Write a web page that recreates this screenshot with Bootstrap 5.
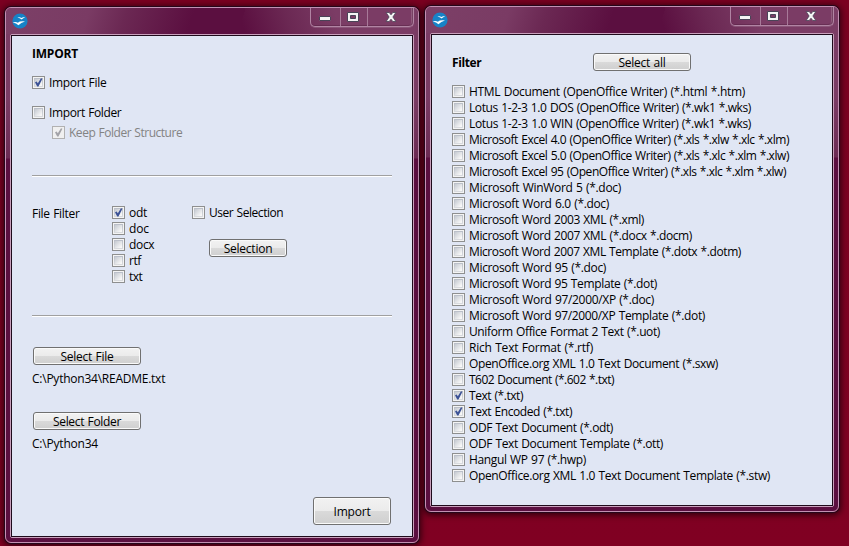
<!DOCTYPE html>
<html lang="en">
<head>
<meta charset="utf-8">
<title>Import</title>
<link rel="stylesheet" href="https://cdn.jsdelivr.net/npm/bootstrap@5.3.0/dist/css/bootstrap.min.css">
<style>
body{width:849px;height:546px;overflow:hidden;background:linear-gradient(#7b0021,#800022);font:12px/13px "Open Sans","Noto Sans",sans-serif;color:#000}
.desk{padding:6px 0 0 5px;gap:6px}
.win{width:414px;border:1px solid #c391b3;border-radius:6px;padding:0 4px 4px;box-shadow:0 0 0 1px #25061a,0 1px 6px 2px rgba(20,0,8,.75);
 background:linear-gradient(#7b3c65 0,#7b3c65 90px,#6c2b54 150px,#5b0f40 151px)}
.win-main{height:536px;margin-top:1px}
.win-filter{height:506px}
.titlebar{height:26px;margin:0 -4px;padding:0 5px 0 6px;border-radius:5px 5px 0 0;background:linear-gradient(108deg,#7c4067 0,#7a3b64 20%,#6b2853 29%,#5b0f40 45%,#5b0f40 57%,#0000 57%),linear-gradient(72deg,#5b0f40 57%,#6b2853 68%,#7b3c65 80%)}
.logo{width:16px;height:16px;margin-top:5px;display:block}
.caps{width:104px;height:19px;border:1px solid #b184a3;border-top:0;border-radius:0 0 5px 5px;box-shadow:inset -1px -1px 0 #4d1b3c66,inset -2px 0 0 #a0708f99,0 1px 0 #9a6b8a88;margin-right:-1px}
.cap{display:block;height:18px;padding-top:4px}
.cap-min{width:29px;padding-left:8px}
.cap-max{width:27px;padding-left:6px}
.cap+.cap{border-left:1px solid #a87a99}
.caps svg{display:block}
.client{border:1px solid #c9a0bc;border-radius:2px;margin:0}
.pane{border:1px solid #1e0a1b;background:#e0e6f4;width:402px}
.win-main .pane{height:502px;padding:11px 20px 11px}
.win-filter .pane{height:472px;padding:18px 20px 0}
.tick{gap:4px;height:13px;white-space:nowrap}
.tick .form-check-input{width:13px;height:13px;margin:0;border:1px solid #8e8f8f;border-radius:0;flex:none;
 background:linear-gradient(135deg,#cbcfd5 10%,#f7f7f7 85%) center/7px 7px no-repeat,linear-gradient(#b9bec8,#dadcdf) center/9px 9px no-repeat #f4f4f4;opacity:1}
.tick .form-check-input:checked{background:url("data:image/svg+xml,%3Csvg xmlns='http://www.w3.org/2000/svg' viewBox='0 0 11 11'%3E%3Cpath d='M2 5.2L3.7 4.5L4.8 6.3L8 1.3L9.4 1.7L5.5 9.4H4.2Z' fill='%233c5296'/%3E%3C/svg%3E") center/11px 11px no-repeat,linear-gradient(135deg,#cbcfd5 10%,#f7f7f7 85%) center/7px 7px no-repeat,linear-gradient(#b9bec8,#dadcdf) center/9px 9px no-repeat #f4f4f4}
.tick .form-check-input:disabled{opacity:1;border-color:#b1b1b1;background:url("data:image/svg+xml,%3Csvg xmlns='http://www.w3.org/2000/svg' viewBox='0 0 11 11'%3E%3Cpath d='M2 5.2L3.7 4.5L4.8 6.3L8 1.3L9.4 1.7L5.5 9.4H4.2Z' fill='%23a3a3a8'/%3E%3C/svg%3E") center/11px 11px no-repeat #f0f0f0}
.off,.tick .form-check-input:disabled~span{color:#838383;opacity:1}
[data-w]{white-space:nowrap;display:inline-block;word-spacing:.6px}
.rule{height:2px;border-top:1px solid #a0a0a0;background:#fff}
.push{height:18px;padding:0;font-size:12px;line-height:18px;color:#000;border:1px solid #707070;border-radius:3px;box-shadow:inset 0 0 0 1px #fafafa;background:linear-gradient(#f2f2f2 0,#ebebeb 49%,#dadada 50%,#cfcfcf 100%)}
.w108{width:108px;margin-left:1px}.w98{width:98px}.w78{width:78px}
.push.tall{height:28px;line-height:25px}
.filters{gap:3px;margin-top:14px}
</style>
</head>
<body>
<svg width="0" height="0" class="position-absolute">
 <symbol id="gulls" viewBox="0 0 16 16"><circle cx="8" cy="8" r="7.6" fill="#1683c7"/><path d="M5.3 4.4Q8 3.7 9.4 4.9Q11 3.7 13.3 4.5Q11 4.9 9.7 6.4Q8 5 5.3 4.4ZM.6 9.4Q4 8.4 5.8 9.7Q8 7.9 13 8.5Q9 9.5 6.4 12.2Q4.6 10.2 .6 9.4Z" fill="#fff"/></symbol>
 <symbol id="win-min" viewBox="0 0 12 9"><rect x=".5" y="4.5" width="11" height="4" rx=".5" fill="#f4f4f4" stroke="#4a4357"/></symbol>
 <symbol id="win-max" viewBox="0 0 12 10"><path d="M.5.5h11v9H.5ZM3.5 3.5v3h5v-3Z" fill="#f4f4f4" fill-rule="evenodd" stroke="#4a4357"/></symbol>
 <symbol id="win-close" viewBox="0 0 12 10"><path d="M1.1.5H4.2L6 2.8L7.8.5H10.9L7.9 5L10.9 9.5H7.8L6 7.2L4.2 9.5H1.1L4.1 5Z" fill="#f4f4f4" stroke="#4a4357" stroke-width=".8"/></symbol>
</svg>
<main class="desk d-flex align-items-start">
 <section class="win win-main">
  <header class="titlebar d-flex justify-content-between">
   <svg class="logo"><use href="#gulls"/></svg>
   <div class="caps d-flex"><span class="cap cap-min"><svg width="12" height="9"><use href="#win-min"/></svg></span><span class="cap cap-max"><svg width="12" height="10"><use href="#win-max"/></svg></span><span class="cap flex-fill d-flex justify-content-center"><svg width="12" height="10"><use href="#win-close"/></svg></span></div>
  </header>
  <div class="client"><div class="pane d-flex flex-column align-items-start">
   <div class="fw-bold"><span data-w="46">IMPORT</span></div>
   <label class="tick d-flex" style="margin-top:16px"><input class="form-check-input" type="checkbox" checked><span data-w="57.3">Import File</span></label>
   <label class="tick d-flex" style="margin-top:17px"><input class="form-check-input" type="checkbox"><span data-w="72.3">Import Folder</span></label>
   <label class="tick d-flex off" style="margin:7px 0 0 20px"><input class="form-check-input" type="checkbox" checked disabled><span data-w="113.2">Keep Folder Structure</span></label>
   <div class="rule w-100" style="margin-top:36px"></div>
   <div class="d-flex" style="margin-top:29px">
    <div style="width:80px;padding-top:1px"><span data-w="47.5">File Filter</span></div>
    <div class="d-flex flex-column" style="width:80px;gap:3px">
     <label class="tick d-flex"><input class="form-check-input" type="checkbox" checked><span data-w="18">odt</span></label>
     <label class="tick d-flex"><input class="form-check-input" type="checkbox"><span data-w="20">doc</span></label>
     <label class="tick d-flex"><input class="form-check-input" type="checkbox"><span data-w="25.3">docx</span></label>
     <label class="tick d-flex"><input class="form-check-input" type="checkbox"><span data-w="12">rtf</span></label>
     <label class="tick d-flex"><input class="form-check-input" type="checkbox"><span data-w="13.3">txt</span></label>
    </div>
    <div>
     <label class="tick d-flex"><input class="form-check-input" type="checkbox"><span data-w="74.2">User Selection</span></label>
     <button class="btn push w78 d-block" style="margin:20px 0 0 17px"><span data-w="48.5">Selection</span></button>
    </div>
   </div>
   <div class="rule w-100" style="margin-top:32px"></div>
   <button class="btn push w108" style="margin-top:30px"><span data-w="53">Select File</span></button>
   <div style="margin-top:7px"><span data-w="133.2">C:\Python34\README.txt</span></div>
   <button class="btn push w108" style="margin-top:27px"><span data-w="68">Select Folder</span></button>
   <div style="margin-top:7px"><span data-w="66">C:\Python34</span></div>
   <button class="btn push tall w78 mt-auto align-self-end" style="margin-right:1px"><span data-w="37">Import</span></button>
  </div></div>
 </section>
 <section class="win win-filter">
  <header class="titlebar d-flex justify-content-between">
   <svg class="logo"><use href="#gulls"/></svg>
   <div class="caps d-flex"><span class="cap cap-min"><svg width="12" height="9"><use href="#win-min"/></svg></span><span class="cap cap-max"><svg width="12" height="10"><use href="#win-max"/></svg></span><span class="cap flex-fill d-flex justify-content-center"><svg width="12" height="10"><use href="#win-close"/></svg></span></div>
  </header>
  <div class="client"><div class="pane">
   <div class="d-flex"><div class="fw-bold" style="width:141px;padding-top:3px"><span data-w="29.4">Filter</span></div><button class="btn push w98"><span data-w="47">Select all</span></button></div>
   <div class="filters d-flex flex-column" id="filters"></div>
  </div></div>
 </section>
</main>
<script src="https://cdn.jsdelivr.net/npm/bootstrap@5.3.0/dist/js/bootstrap.bundle.min.js"></script>
<script>
// Filter name, label width in px, preselected
const filters=[
["HTML Document (OpenOffice Writer) (*.html *.htm)",276],
["Lotus 1-2-3 1.0 DOS (OpenOffice Writer) (*.wk1 *.wks)",282],
["Lotus 1-2-3 1.0 WIN (OpenOffice Writer) (*.wk1 *.wks)",282],
["Microsoft Excel 4.0 (OpenOffice Writer) (*.xls *.xlw *.xlc *.xlm)",320],
["Microsoft Excel 5.0 (OpenOffice Writer) (*.xls *.xlc *.xlm *.xlw)",320],
["Microsoft Excel 95 (OpenOffice Writer) (*.xls *.xlc *.xlm *.xlw)",317],
["Microsoft WinWord 5 (*.doc)",152],
["Microsoft Word 6.0 (*.doc)",140],
["Microsoft Word 2003 XML (*.xml)",175],
["Microsoft Word 2007 XML (*.docx *.docm)",223],
["Microsoft Word 2007 XML Template (*.dotx *.dotm)",272],
["Microsoft Word 95 (*.doc)",137],
["Microsoft Word 95 Template (*.dot)",188],
["Microsoft Word 97/2000/XP (*.doc)",185],
["Microsoft Word 97/2000/XP Template (*.dot)",236],
["Uniform Office Format 2 Text (*.uot)",191],
["Rich Text Format (*.rtf)",124],
["OpenOffice.org XML 1.0 Text Document (*.sxw)",249],
["T602 Document (*.602 *.txt)",145],
["Text (*.txt)",54,1],
["Text Encoded (*.txt)",103,1],
["ODF Text Document (*.odt)",144],
["ODF Text Document Template (*.ott)",194],
["Hangul WP 97 (*.hwp)",117],
["OpenOffice.org XML 1.0 Text Document Template (*.stw)",301]];
document.getElementById("filters").innerHTML=filters.map(([t,w,c])=>
 `<label class="tick d-flex"><input class="form-check-input" type="checkbox"${c?" checked":""}><span data-w="${w}">${t}</span></label>`).join("");
// Track each label to its set width
document.querySelectorAll("[data-w]").forEach(e=>{
 const d=(e.dataset.w-e.getBoundingClientRect().width)/e.textContent.length;
 e.style.letterSpacing=d.toFixed(3)+"px";
});
</script>
</body>
</html>
